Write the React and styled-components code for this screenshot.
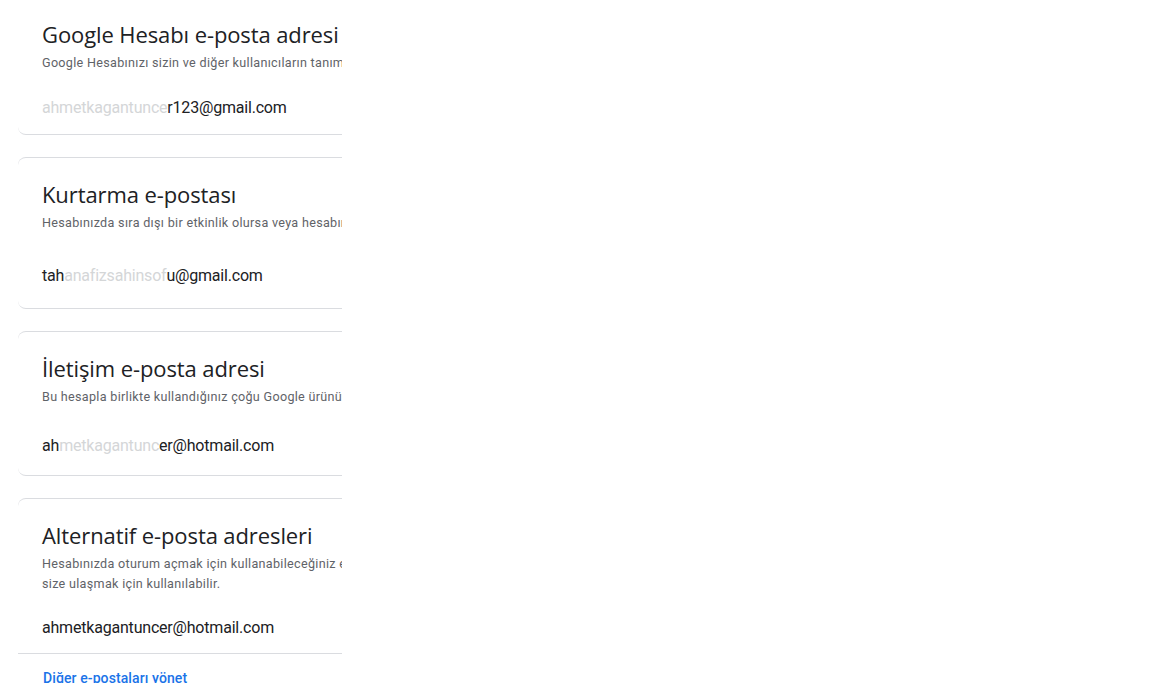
import React from 'react'
import styled, { createGlobalStyle } from 'styled-components'

const Global = createGlobalStyle`
  html, body {
    margin: 0;
    padding: 0;
    background: #fff;
    overflow: hidden;
  }
  body {
    font-family: Roboto, "Liberation Sans", Arial, sans-serif;
    color: #202124;
  }
`

const Page = styled.div`
  width: 1152px;
  height: 683px;
  overflow: hidden;
`

const Column = styled.div`
  margin: -2px 0 0 18px;
  width: 324px;
  overflow: hidden;
  display: flex;
  flex-direction: column;
  gap: 22px;
`

const Card = styled.section`
  width: 640px;
  border-top: ${({ $noTop }) => ($noTop ? '0' : '1px solid #dadce0')};
  border-bottom: 1px solid #dadce0;
  border-radius: 8px;
  padding-top: 22px;
  padding-bottom: ${({ $bottom }) => $bottom}px;
  box-sizing: border-box;
`

const Body = styled.div`
  padding: 0 24px;
  display: flex;
  flex-direction: column;
`

const Title = styled.h2`
  margin: 0;
  font-family: "Open Sans", Roboto, sans-serif;
  font-size: 22px;
  font-weight: 400;
  line-height: 28px;
  letter-spacing: -0.1px;
  color: #202124;
  white-space: nowrap;
`

const Desc = styled.p`
  margin: 5px 0 0;
  font-size: 12.6px;
  line-height: 20px;
  letter-spacing: 0.3px;
  color: #5f6368;
  white-space: nowrap;
`

const Email = styled.div`
  margin-top: ${({ $top }) => $top}px;
  font-size: 16px;
  line-height: 24px;
  letter-spacing: -0.2px;
  color: #202124;
  white-space: nowrap;
`

const Hidden = styled.span`
  color: #b8bbbe;
  opacity: 0.6;
  letter-spacing: -0.2px;
`

const Divider = styled.div`
  margin-top: 13px;
  border-top: 1px solid #dadce0;
`

const Footer = styled.div`
  padding: 14px 25px 0;
`

const Link = styled.a`
  font-size: 14px;
  line-height: 20px;
  font-weight: 500;
  letter-spacing: 0.1px;
  color: #1a73e8;
  text-decoration: none;
`

const cards = [
  {
    title: 'Google Hesabı e-posta adresi',
    desc: 'Google Hesabınızı sizin ve diğer kullanıcıların tanımlamasına yardımcı olan adres',
    email: [['ahmetkagantunce', true], ['r123@gmail.com', false]],
    top: 23,
    bottom: 14,
    noTop: true,
  },
  {
    title: 'Kurtarma e-postası',
    desc: 'Hesabınızda sıra dışı bir etkinlik olursa veya hesabınıza erişiminizi kaybederseniz',
    email: [['tah', false], ['anafizsahinsof', true], ['u@gmail.com', false]],
    top: 31,
    bottom: 20,
  },
  {
    title: 'İletişim e-posta adresi',
    desc: 'Bu hesapla birlikte kullandığınız çoğu Google ürünüyle ilgili bilgilerin gönderildiği yer',
    email: [['ah', false], ['metkagantunc', true], ['er@hotmail.com', false]],
    top: 27,
    bottom: 17,
  },
]

const EmailText = ({ parts }) => (
  <>
    {parts.map(([text, hidden], i) =>
      hidden ? <Hidden key={i}>{text}</Hidden> : <span key={i}>{text}</span>
    )}
  </>
)

const App = () => {
  return (
    <Page>
      <Global />
      <Column>
        {cards.map((c) => (
          <Card key={c.title} $noTop={c.noTop} $bottom={c.bottom}>
            <Body>
              <Title>{c.title}</Title>
              <Desc>{c.desc}</Desc>
              <Email $top={c.top}>
                <EmailText parts={c.email} />
              </Email>
            </Body>
          </Card>
        ))}
        <Card $bottom={20}>
          <Body>
            <Title>Alternatif e-posta adresleri</Title>
            <Desc>
              Hesabınızda oturum açmak için kullanabileceğiniz e-posta adresleri. Bu adresler ayrıca
              <br />
              size ulaşmak için kullanılabilir.
            </Desc>
            <Email $top={22}>ahmetkagantuncer@hotmail.com</Email>
          </Body>
          <Divider />
          <Footer>
            <Link href="#">Diğer e-postaları yönet</Link>
          </Footer>
        </Card>
      </Column>
    </Page>
  )
}

export default App
